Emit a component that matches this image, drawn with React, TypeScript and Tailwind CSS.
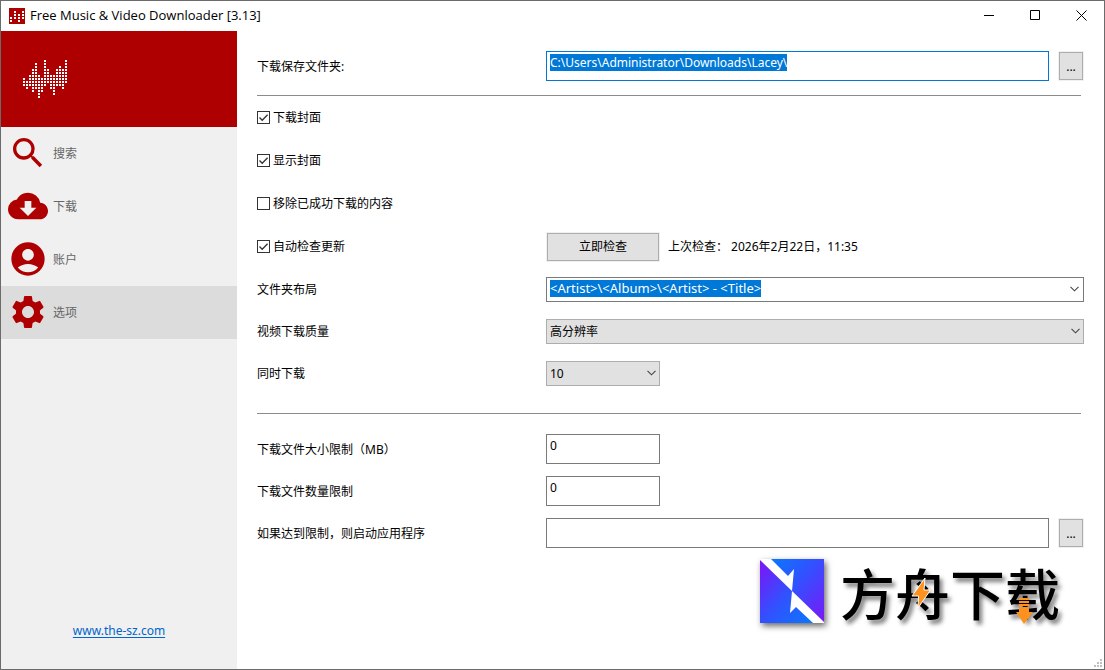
import { useState } from "react";
import type { ReactNode } from "react";
import {
  MdAccountCircle,
  MdCloudDownload,
  MdSearch,
  MdSettings,
} from "react-icons/md";

const menu = [
  { label: "搜索", icon: MdSearch },
  { label: "下载", icon: MdCloudDownload },
  { label: "账户", icon: MdAccountCircle },
  { label: "选项", icon: MdSettings },
];

// first and last lit row of every column in the equalizer logo
const wave = [
  [6, 8],
  [7, 9],
  [5, 8],
  [3, 10],
  [1, 9],
  [5, 12],
  [6, 10],
  [0, 8],
  [3, 7],
  [5, 9],
  [5, 11],
  [3, 8],
  [2, 8],
  [3, 9],
  [0, 7],
];

const WaveLogo = () => (
  <svg width="44" height="38" viewBox="0 0 44 38" fill="#fff" shapeRendering="crispEdges">
    {wave.map(([from, to], col) =>
      Array.from({ length: to - from + 1 }, (_, i) => (
        <rect key={`${col}-${i}`} x={col * 3} y={(from + i) * 3} width="2" height="2" />
      ))
    )}
  </svg>
);

const AppIcon = () => (
  <svg width="16" height="16" viewBox="0 0 16 16" shapeRendering="crispEdges">
    <path fill="#ae0000" d="M0 0h16v16H0z" />
    <path
      fill="#fff"
      d="M1 9h2v2H1zM1 12h2v2H1zM5 3h2v2H5zM5 6h2v2H5zM5 9h2v2H5zM9 6h2v2H9zM9 9h2v2H9zM9 12h2v2H9zM13 3h2v2h-2zM13 6h2v2h-2zM13 9h2v2h-2z"
    />
  </svg>
);

const Chevron = () => (
  <svg
    className="pointer-events-none absolute right-1 top-1/2 -translate-y-1/2"
    width="9"
    height="6"
    viewBox="0 0 9 6"
    fill="none"
    stroke="#444"
    strokeWidth="1.1"
  >
    <path d="M.5 .8l4 4 4-4" />
  </svg>
);

const TitleBar = () => (
  <header className="flex h-[30px] items-center bg-white pb-px pl-2">
    <AppIcon />
    <h1 className="ml-[5px] flex-1 font-['Open_Sans',sans-serif] text-[13px]">
      Free Music &amp; Video Downloader [3.13]
    </h1>
    <button aria-label="最小化" className="flex h-full w-[46px] items-center justify-center">
      <svg width="11" height="11" viewBox="0 0 11 11" stroke="#000">
        <path d="M0 5.500h10" />
      </svg>
    </button>
    <button aria-label="最大化" className="flex h-full w-[46px] items-center justify-center">
      <svg width="11" height="11" viewBox="0 0 11 11" fill="none" stroke="#000">
        <path d="M.5 .5h9v9h-9z" />
      </svg>
    </button>
    <button aria-label="关闭" className="flex h-full w-[46px] items-center justify-center">
      <svg width="11" height="11" viewBox="0 0 11 11" stroke="#000">
        <path d="M.5 .5l10 10M10.5 .5l-10 10" />
      </svg>
    </button>
  </header>
);

const Sidebar = () => {
  const [active, setActive] = useState("选项");
  return (
    <aside className="flex w-[236px] shrink-0 flex-col bg-[#f0f0f0]">
      <div className="flex h-24 items-center bg-[#ae0000] pl-[22px]">
        <WaveLogo />
      </div>
      <nav className="flex flex-col">
        {menu.map(({ label, icon: Icon }) => (
          <button
            key={label}
            onClick={() => setActive(label)}
            className={`flex h-[53px] items-center gap-[5px] pb-px pl-[7px] text-[#666] ${
              active === label ? "bg-[#dcdcdc]" : ""
            }`}
          >
            <Icon size={40} color="#ae0000" />
            {label}
          </button>
        ))}
      </nav>
      <a
        href="#site"
        className="mt-auto mb-[30px] self-center text-[#0066cc] underline underline-offset-2"
      >
        www.the-sz.com
      </a>
    </aside>
  );
};

const Row = ({ id, label, children }: { id: string; label: string; children: ReactNode }) => (
  <div className="flex h-[42px] items-center">
    <label htmlFor={id} className="w-[289px] shrink-0">
      {label}
    </label>
    {children}
  </div>
);

const Check = ({ label, checked = false }: { label: string; checked?: boolean }) => (
  <label className="flex w-[289px] shrink-0 items-center gap-[3px]">
    <span className="relative flex">
      <input
        type="checkbox"
        defaultChecked={checked}
        className="peer size-[13px] appearance-none border border-[#333] bg-white"
      />
      <svg
        className="pointer-events-none absolute inset-0 hidden peer-checked:block"
        width="13"
        height="13"
        viewBox="0 0 13 13"
        fill="none"
        stroke="#333"
        strokeWidth="1.3"
      >
        <path d="M2.5 6.5l2.7 2.8 5.4-5.5" />
      </svg>
    </span>
    {label}
  </label>
);

const Browse = ({ label }: { label: string }) => (
  <button
    aria-label={label}
    className="ml-[9px] h-[30px] w-[26px] shrink-0 border border-[#f0f0f0] bg-[#e1e1e1] outline outline-1 -outline-offset-2 outline-[#adadad]"
  >
    ...
  </button>
);

const Brand = () => (
  <div className="mt-[5px] mr-6 flex items-center gap-4 self-end">
    <svg
      className="drop-shadow-[2px_3px_3px_rgba(0,0,0,0.6)]"
      width="64"
      height="64"
      viewBox="0 0 64 64"
    >
      <defs>
        <linearGradient id="upper" x1="0" y1="0" x2="1" y2="1">
          <stop offset="0" stopColor="#0a78ff" />
          <stop offset="0.45" stopColor="#3350ff" />
          <stop offset="1" stopColor="#7a18f8" />
        </linearGradient>
        <linearGradient id="lower" x1="0" y1="0" x2="1" y2="1">
          <stop offset="0" stopColor="#8012f5" />
          <stop offset="0.5" stopColor="#3350ff" />
          <stop offset="1" stopColor="#0a78ff" />
        </linearGradient>
      </defs>
      <path fill="#fff" d="M0 0h64v64H0z" />
      <path fill="url(#upper)" d="M11 0H64V63L32 32L34 10L28 17Z" />
      <path fill="url(#lower)" d="M0 1L32 32L30 54L36 48L53 64H0Z" />
    </svg>
    <div className="relative">
      <span className="block font-['Noto_Sans_CJK_SC',sans-serif] text-[55px] font-medium leading-[64px] text-black [text-shadow:3px_4px_4px_rgba(0,0,0,0.5)]">
        方舟下载
      </span>
      <svg
        className="absolute left-0 top-0"
        width="220"
        height="68"
        viewBox="0 0 220 68"
        fill="#ff921e"
      >
        <path
          stroke="#fff"
          strokeWidth="1"
          d="M85 19L72 37h6.500L78 49L90.500 31H84z"
        />
        <path d="M179 39h10v2h-10zM179 42h10v2h-10zM179 45h10v2h-10zM179 48h10v5h4l-9 12-8-12h3z" />
      </svg>
    </div>
  </div>
);

const App = () => {
  return (
    <div className="flex min-h-screen flex-col border border-[#6b6b6b] bg-white font-['Noto_Sans','Noto_Sans_CJK_SC',sans-serif] text-xs leading-[17px] text-black">
      <TitleBar />
      <div className="flex flex-1">
        <Sidebar />
        <main className="relative flex min-w-0 flex-1 flex-col px-5 pt-5">
          <div className="flex items-center">
            <label htmlFor="folder" className="w-[289px] shrink-0">
              下载保存文件夹:
            </label>
            <div className="flex h-[30px] min-w-0 flex-1 items-start border border-[#0078d7] px-[3px] pt-0.5">
              <input
                id="folder"
                defaultValue="C:\Users\Administrator\Downloads\Lacey\"
                className="field-sizing-content h-[17px] max-w-full bg-[#0078d7] text-white outline-none"
              />
            </div>
            <Browse label="选择文件夹" />
          </div>
          <hr className="mt-3.5 mr-[3px] border-[#8c8c8c]" />

          <div className="flex h-[43px] items-center">
            <Check label="下载封面" checked />
          </div>
          <div className="flex h-[43px] items-center">
            <Check label="显示封面" checked />
          </div>
          <div className="flex h-[43px] items-center">
            <Check label="移除已成功下载的内容" />
          </div>
          <div className="flex h-[43px] items-center">
            <Check label="自动检查更新" checked />
            <button className="h-[30px] w-[114px] border border-[#f0f0f0] bg-[#e1e1e1] outline outline-1 -outline-offset-2 outline-[#adadad]">
              立即检查
            </button>
            <span className="ml-2 whitespace-pre">上次检查： 2026年2月22日，11:35</span>
          </div>

          <Row id="layout" label="文件夹布局">
            <div className="relative flex h-[25px] min-w-0 flex-1 items-start border border-[#7a7a7a] px-[3px] pt-0.5">
              <input
                id="layout"
                role="combobox"
                aria-expanded="false"
                defaultValue="<Artist>\<Album>\<Artist> - <Title>"
                className="field-sizing-content h-[17px] max-w-full bg-[#0078d7] text-[13px] text-white outline-none"
              />
              <Chevron />
            </div>
          </Row>
          <Row id="quality" label="视频下载质量">
            <div className="relative flex-1">
              <select
                id="quality"
                className="block h-[25px] w-full appearance-none border border-[#adadad] bg-[#e1e1e1] px-[3px]"
              >
                <option>高分辨率</option>
              </select>
              <Chevron />
            </div>
          </Row>
          <Row id="parallel" label="同时下载">
            <div className="relative w-[114px]">
              <select
                id="parallel"
                className="block h-[25px] w-full appearance-none border border-[#adadad] bg-[#e1e1e1] px-[3px]"
              >
                <option>10</option>
              </select>
              <Chevron />
            </div>
          </Row>
          <hr className="mt-[19px] mr-[3px] mb-3.5 border-[#8c8c8c]" />

          <Row id="size" label="下载文件大小限制（MB）">
            <input
              id="size"
              defaultValue="0"
              className="h-[30px] w-[114px] border border-[#7a7a7a] px-[3px] pb-2"
            />
          </Row>
          <Row id="count" label="下载文件数量限制">
            <input
              id="count"
              defaultValue="0"
              className="h-[30px] w-[114px] border border-[#7a7a7a] px-[3px] pb-2"
            />
          </Row>
          <Row id="program" label="如果达到限制，则启动应用程序">
            <input
              id="program"
              className="h-[30px] min-w-0 flex-1 border border-[#7a7a7a] px-[3px] pb-2"
            />
            <Browse label="选择应用程序" />
          </Row>

          <Brand />

          <svg
            className="absolute right-0.5 bottom-0.5"
            width="8"
            height="8"
            viewBox="0 0 8 8"
            fill="#bfbfbf"
          >
            <path d="M6 0h2v2H6zM3 3h2v2H3zM6 3h2v2H6zM0 6h2v2H0zM3 6h2v2H3zM6 6h2v2H6z" />
          </svg>
        </main>
      </div>
    </div>
  );
};

export default App;
